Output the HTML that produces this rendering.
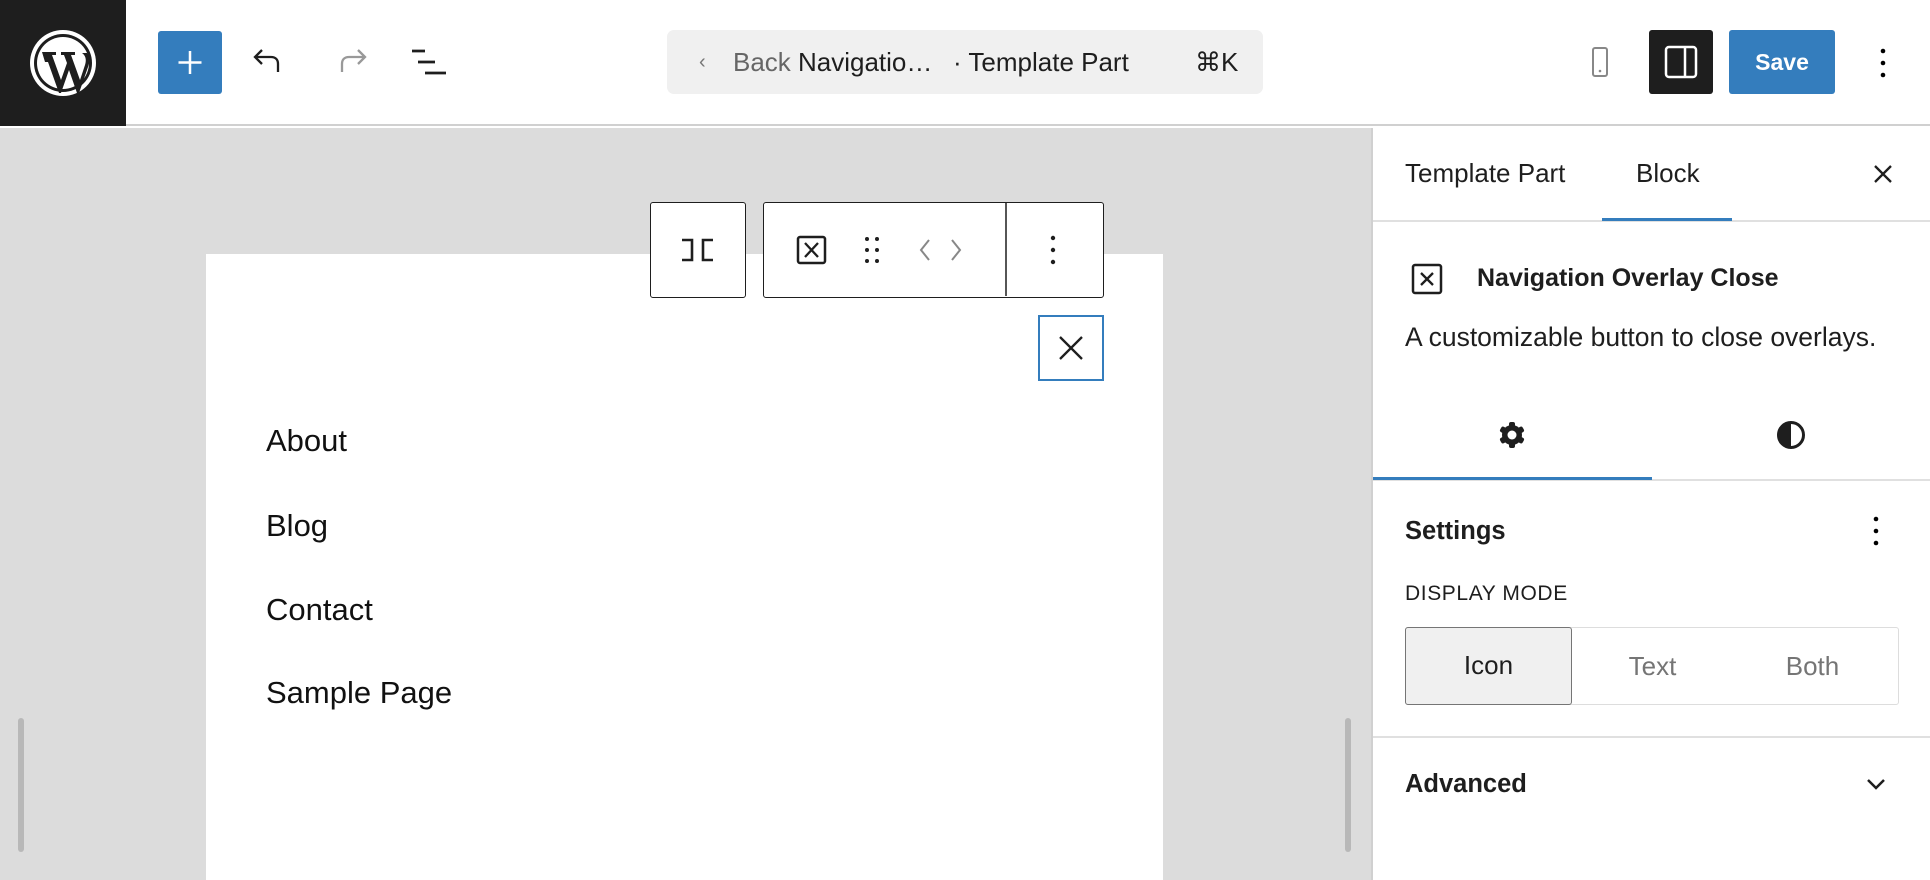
<!DOCTYPE html>
<html><head><meta charset="utf-8"><style>
*{box-sizing:border-box;margin:0;padding:0}
body{width:1930px;height:880px;overflow:hidden;background:#fff;font-family:"Liberation Sans",sans-serif;color:#1e1e1e;position:relative}
.a{position:absolute}
.top{left:0;top:0;width:1930px;height:126px;background:#fff;border-bottom:2px solid #d0d0d0}
.logo{left:0;top:0;width:126px;height:126px;background:#1e1e1e}
.plus{left:158px;top:31px;width:64px;height:63px;background:#347dbd;border-radius:3px}
.cmd{left:667px;top:30px;width:596px;height:64px;background:#f0f0f0;border-radius:7px;font-size:26px;line-height:64px}
.canvas{left:0;top:128px;width:1371px;height:752px;background:#dcdcdc}
.page{left:206px;top:254px;width:957px;height:626px;background:#fff}
.tb{border:1.5px solid #1e1e1e;border-radius:3px;background:#fff}
.menu{left:266px;font-size:31px;color:#111}
.side{left:1371px;top:128px;width:559px;height:752px;background:#fff;border-left:2px solid #d0d0d0}
.st{font-size:26px}
.sb{background:#b8b8b8;border-radius:3px;width:6px}
</style></head><body>
<div class="a top"></div>
<div class="a logo"><svg width="126" height="126" viewBox="0 0 126 126"><circle cx="63" cy="63" r="33" fill="#fff"/><circle cx="63" cy="63" r="29" fill="#1e1e1e"/><circle cx="63" cy="63" r="26" fill="#fff"/><path d="M42 52h14v3h-4l9 25 6-17-3-8h-3v-3h14v3h-4l9 25 5-15c2-6 0-10-3-12h5c3 4 3 9 1 14l-9 26h-2l-8-23-8 23h-2l-11-31h-3z" fill="#1e1e1e"/></svg></div>
<div class="a plus"><svg width="64" height="63"><path d="M32 20v23M20.5 31.5h23" stroke="#fff" stroke-width="2.5"/></svg></div>
<svg class="a" style="left:252px;top:46px" width="36" height="32"><path d="M10 4L3 11l7 7M3 11h16c5 0 7 3 7 7v8" fill="none" stroke="#1e1e1e" stroke-width="2.3"/></svg>
<svg class="a" style="left:332px;top:46px" width="36" height="32"><path d="M26 4l7 7-7 7M33 11H17c-5 0-7 3-7 7v8" fill="none" stroke="#999" stroke-width="2.3"/></svg>
<svg class="a" style="left:410px;top:48px" width="40" height="30"><path d="M2 3h13M8 14h17M15 25h21" stroke="#1e1e1e" stroke-width="2.8"/></svg>
<div class="a cmd"><span class="a" style="left:32px;color:#777;font-size:20px">‹</span><span class="a" style="left:66px;color:#666">Back</span><span class="a" style="left:131px;color:#1e1e1e">Navigatio…</span><span class="a" style="left:286px;color:#1e1e1e">· Template Part</span><span class="a" style="left:528px;color:#1e1e1e">⌘K</span></div>
<svg class="a" style="left:1588px;top:46px" width="24" height="34"><rect x="5" y="2" width="14" height="28" rx="2" fill="none" stroke="#888" stroke-width="2"/><circle cx="12" cy="25" r="1.3" fill="#888"/></svg>
<div class="a" style="left:1649px;top:30px;width:64px;height:64px;background:#1e1e1e;border-radius:3px"><svg width="64" height="64"><rect x="17" y="17" width="30" height="30" rx="3" fill="none" stroke="#fff" stroke-width="2.5"/><path d="M36 17v30" stroke="#fff" stroke-width="2.5"/></svg></div>
<div class="a" style="left:1729px;top:30px;width:106px;height:64px;background:#347dbd;border-radius:3px;color:#fff;font-weight:bold;font-size:23px;line-height:64px;text-align:center">Save</div>
<svg class="a" style="left:1877px;top:46px" width="12" height="34"><circle cx="6" cy="5" r="2.3"/><circle cx="6" cy="17" r="2.3"/><circle cx="6" cy="29" r="2.3"/></svg>

<div class="a canvas"></div>
<div class="a page"></div>
<div class="a sb" style="left:18px;top:718px;height:134px"></div>
<div class="a sb" style="left:1345px;top:718px;height:134px"></div>
<div class="a tb" style="left:650px;top:202px;width:96px;height:96px"><svg width="93" height="93"><path d="M31 37h10v20h-10M62 37h-10v20h10" fill="none" stroke="#1e1e1e" stroke-width="2.6"/></svg></div>
<div class="a tb" style="left:763px;top:202px;width:341px;height:96px">
<svg class="a" style="left:0;top:0" width="340" height="93"><rect x="34" y="34" width="27" height="26" rx="2" fill="none" stroke="#1e1e1e" stroke-width="2.5"/><path d="M41 40l13 14M54 40L41 54" stroke="#1e1e1e" stroke-width="2.3"/>
<g fill="#1e1e1e"><circle cx="103" cy="36" r="2"/><circle cx="113" cy="36" r="2"/><circle cx="103" cy="47" r="2"/><circle cx="113" cy="47" r="2"/><circle cx="103" cy="58" r="2"/><circle cx="113" cy="58" r="2"/></g>
<path d="M165 37l-8 10 8 10M188 37l8 10-8 10" fill="none" stroke="#888" stroke-width="2"/>
<path d="M242 0v93" stroke="#1e1e1e" stroke-width="1.5"/>
<g fill="#1e1e1e"><circle cx="289" cy="35" r="2.2"/><circle cx="289" cy="47" r="2.2"/><circle cx="289" cy="59" r="2.2"/></g></svg></div>
<div class="a" style="left:1038px;top:315px;width:66px;height:66px;border:2px solid #347dbd;background:#fff"><svg width="62" height="62"><path d="M20 20l22 22M42 20L20 42" stroke="#1e1e1e" stroke-width="2.3"/></svg></div>
<div class="a menu" style="top:423px">About</div>
<div class="a menu" style="top:508px">Blog</div>
<div class="a menu" style="top:592px">Contact</div>
<div class="a menu" style="top:675px">Sample Page</div>

<div class="a side"></div>
<div class="a st" style="left:1405px;top:158px">Template Part</div>
<div class="a st" style="left:1636px;top:158px">Block</div>
<svg class="a" style="left:1871px;top:162px" width="24" height="24"><path d="M4 4l16 16M20 4L4 20" stroke="#1e1e1e" stroke-width="2.3"/></svg>
<div class="a" style="left:1373px;top:220px;width:557px;height:2px;background:#e0e0e0"></div>
<div class="a" style="left:1602px;top:218px;width:130px;height:3px;background:#347dbd"></div>
<svg class="a" style="left:1410px;top:262px" width="34" height="34"><rect x="3" y="3" width="28" height="28" rx="2" fill="none" stroke="#1e1e1e" stroke-width="2.5"/><path d="M11 11l12 12M23 11L11 23" stroke="#1e1e1e" stroke-width="2.3"/></svg>
<div class="a" style="left:1477px;top:264px;font-weight:bold;font-size:25px">Navigation Overlay Close</div>
<div class="a" style="left:1405px;top:322px;font-size:26.5px">A customizable button to close overlays.</div>
<svg class="a" style="left:1496px;top:419px" width="32" height="32"><g fill="#1e1e1e"><circle cx="16" cy="16" r="10"/><rect x="13" y="3" width="6" height="26" rx="2"/><rect x="13" y="3" width="6" height="26" rx="2" transform="rotate(60 16 16)"/><rect x="13" y="3" width="6" height="26" rx="2" transform="rotate(-60 16 16)"/></g><circle cx="16" cy="16" r="4.5" fill="#fff"/></svg>
<svg class="a" style="left:1775px;top:419px" width="32" height="32"><circle cx="16" cy="16" r="12.5" fill="none" stroke="#1e1e1e" stroke-width="3"/><path d="M16 3a13 13 0 0 0 0 26z" fill="#1e1e1e"/></svg>
<div class="a" style="left:1373px;top:479px;width:557px;height:2px;background:#e0e0e0"></div>
<div class="a" style="left:1373px;top:477px;width:279px;height:3px;background:#347dbd"></div>
<div class="a" style="left:1405px;top:517px;font-weight:bold;font-size:25.5px">Settings</div>
<svg class="a" style="left:1870px;top:514px" width="12" height="34"><circle cx="6" cy="5" r="2.3"/><circle cx="6" cy="17" r="2.3"/><circle cx="6" cy="29" r="2.3"/></svg>
<div class="a" style="left:1405px;top:582px;font-size:21px;letter-spacing:.6px">DISPLAY MODE</div>
<div class="a" style="left:1405px;top:627px;width:494px;height:78px;border:1.5px solid #ddd;border-radius:3px"></div>
<div class="a" style="left:1405px;top:627px;width:167px;height:78px;border:1.5px solid #757575;border-radius:3px;background:#f0f0f0;text-align:center;line-height:75px;font-size:26px">Icon</div>
<div class="a" style="left:1580px;top:627px;width:145px;line-height:78px;text-align:center;font-size:26px;color:#757575">Text</div>
<div class="a" style="left:1740px;top:627px;width:145px;line-height:78px;text-align:center;font-size:26px;color:#757575">Both</div>
<div class="a" style="left:1373px;top:736px;width:557px;height:2px;background:#e0e0e0"></div>
<div class="a" style="left:1405px;top:770px;font-weight:bold;font-size:25.5px">Advanced</div>
<svg class="a" style="left:1864px;top:776px" width="24" height="16"><path d="M4 4l8 8 8-8" fill="none" stroke="#1e1e1e" stroke-width="2.5"/></svg>
</body></html>
